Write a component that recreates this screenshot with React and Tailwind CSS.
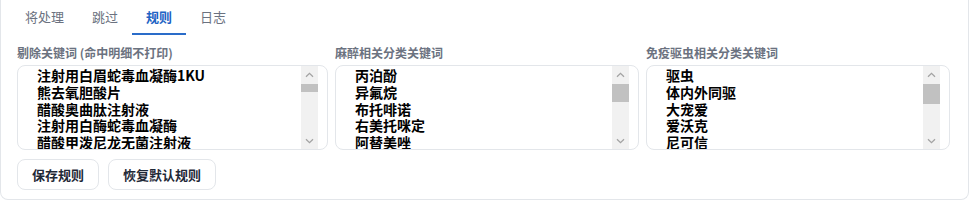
import { useState } from 'react';

const tabs = ['将处理', '跳过', '规则', '日志'];

const excludeWords = [
  '注射用白眉蛇毒血凝酶1KU',
  '熊去氧胆酸片',
  '醋酸奥曲肽注射液',
  '注射用白酶蛇毒血凝酶',
  '醋酸甲泼尼龙无菌注射液',
  '复方氨基酸注射液',
  '葡萄糖注射液',
  '氯化钠注射液',
  '乳酸林格注射液',
  '维生素K1注射液',
  '呋塞米注射液',
  '地塞米松磷酸钠注射液',
  '盐酸雷尼替丁注射液',
  '奥美拉唑钠',
  '马罗匹坦注射液',
  '头孢曲松钠',
  '阿莫西林克拉维酸钾',
  '恩诺沙星注射液',
  '甲硝唑氯化钠注射液',
  '碳酸氢钠注射液',
  '氯化钾注射液',
  '肝素钠注射液',
  '氨甲环酸注射液',
  '维生素B12注射液',
  '复合维生素B注射液',
  '腺苷钴胺',
  '谷胱甘肽',
  '多烯磷脂酰胆碱',
  '乙酰半胱氨酸',
  '硫酸镁注射液',
];

const anesthesiaWords = [
  '丙泊酚',
  '异氟烷',
  '布托啡诺',
  '右美托咪定',
  '阿替美唑',
  '舒泰',
  '利多卡因',
  '七氟烷',
  '氯胺酮',
  '咪达唑仑',
  '地西泮',
  '芬太尼',
  '吗啡',
];

const vaccineWords = [
  '驱虫',
  '体内外同驱',
  '大宠爱',
  '爱沃克',
  '尼可信',
  '超可信',
  '福来恩',
  '博来恩',
  '拜宠清',
  '狂犬疫苗',
  '猫三联',
  '犬八联',
];

function Chevron({ down }) {
  return (
    <svg width="9" height="6" viewBox="0 0 9 6" fill="none">
      <path
        d={down ? 'M1 1.2 L4.5 4.6 L8 1.2' : 'M1 4.8 L4.5 1.4 L8 4.8'}
        stroke="#a3a3a3"
        strokeWidth="1.3"
      />
    </svg>
  );
}

function KeywordBox({ label, words, thumb }) {
  return (
    <div className="flex flex-col min-w-0">
      <div className="text-[12px] font-bold text-[#6b7280] leading-[16px] mt-[3px] mb-[4px]">{label}</div>
      <div className="flex h-[85px] border border-[#e3e6ea] rounded-[8px] bg-white pr-[9px] overflow-hidden">
        <textarea
          readOnly
          defaultValue={words.join('\n')}
          className="block flex-1 min-w-0 h-full resize-none outline-none border-0 bg-transparent pl-[19px] pt-[1px] text-[14px] font-bold text-black leading-[16.8px] overflow-hidden"
        />
        {/* scrollbar drawing */}
        <div className="w-[17px] h-full bg-[#f1f1f1] flex flex-col">
          <div className="h-[17px] flex items-center justify-center">
            <Chevron />
          </div>
          <div className="flex-1 pt-[1px]">
            <div className="bg-[#c1c1c1]" style={{ height: thumb }} />
          </div>
          <div className="h-[17px] flex items-center justify-center">
            <Chevron down />
          </div>
        </div>
      </div>
    </div>
  );
}

export default function App() {
  const [active, setActive] = useState(2);

  return (
    <div
      className="w-[969px] h-[200px] bg-white border-x border-b border-[#e3e6ea] rounded-b-[8px] px-[16px]"
      style={{ fontFamily: '"Noto Sans CJK SC", "Noto Sans", sans-serif' }}
    >
      <div className="flex h-[35px] -ml-[6px]">
        {tabs.map((t, i) => (
          <button
            key={t}
            onClick={() => setActive(i)}
            className={
              i === active
                ? 'h-full px-[14px] text-[13px] font-bold text-[#2163c4] leading-[20px] border-b-2 border-[#2a6cc9]'
                : 'h-full px-[14px] text-[13px] text-[#6b7280] leading-[20px] border-b-2 border-transparent'
            }
          >
            {t}
          </button>
        ))}
      </div>

      <div className="grid grid-cols-[311px_304px_304px] gap-[7px] mt-[7px]">
        <KeywordBox label="剔除关键词 (命中明细不打印)" words={excludeWords} thumb={8} />
        <KeywordBox label="麻醉相关分类关键词" words={anesthesiaWords} thumb={18} />
        <KeywordBox label="免疫驱虫相关分类关键词" words={vaccineWords} thumb={20} />
      </div>

      <div className="flex gap-[9px] mt-[9px]">
        <button className="h-[31px] px-[14px] rounded-[8px] border border-[#e3e6ea] bg-white text-[13px] font-bold text-[#1f2937]">
          保存规则
        </button>
        <button className="h-[31px] px-[14px] rounded-[8px] border border-[#e3e6ea] bg-white text-[13px] font-bold text-[#1f2937]">
          恢复默认规则
        </button>
      </div>
    </div>
  );
}
